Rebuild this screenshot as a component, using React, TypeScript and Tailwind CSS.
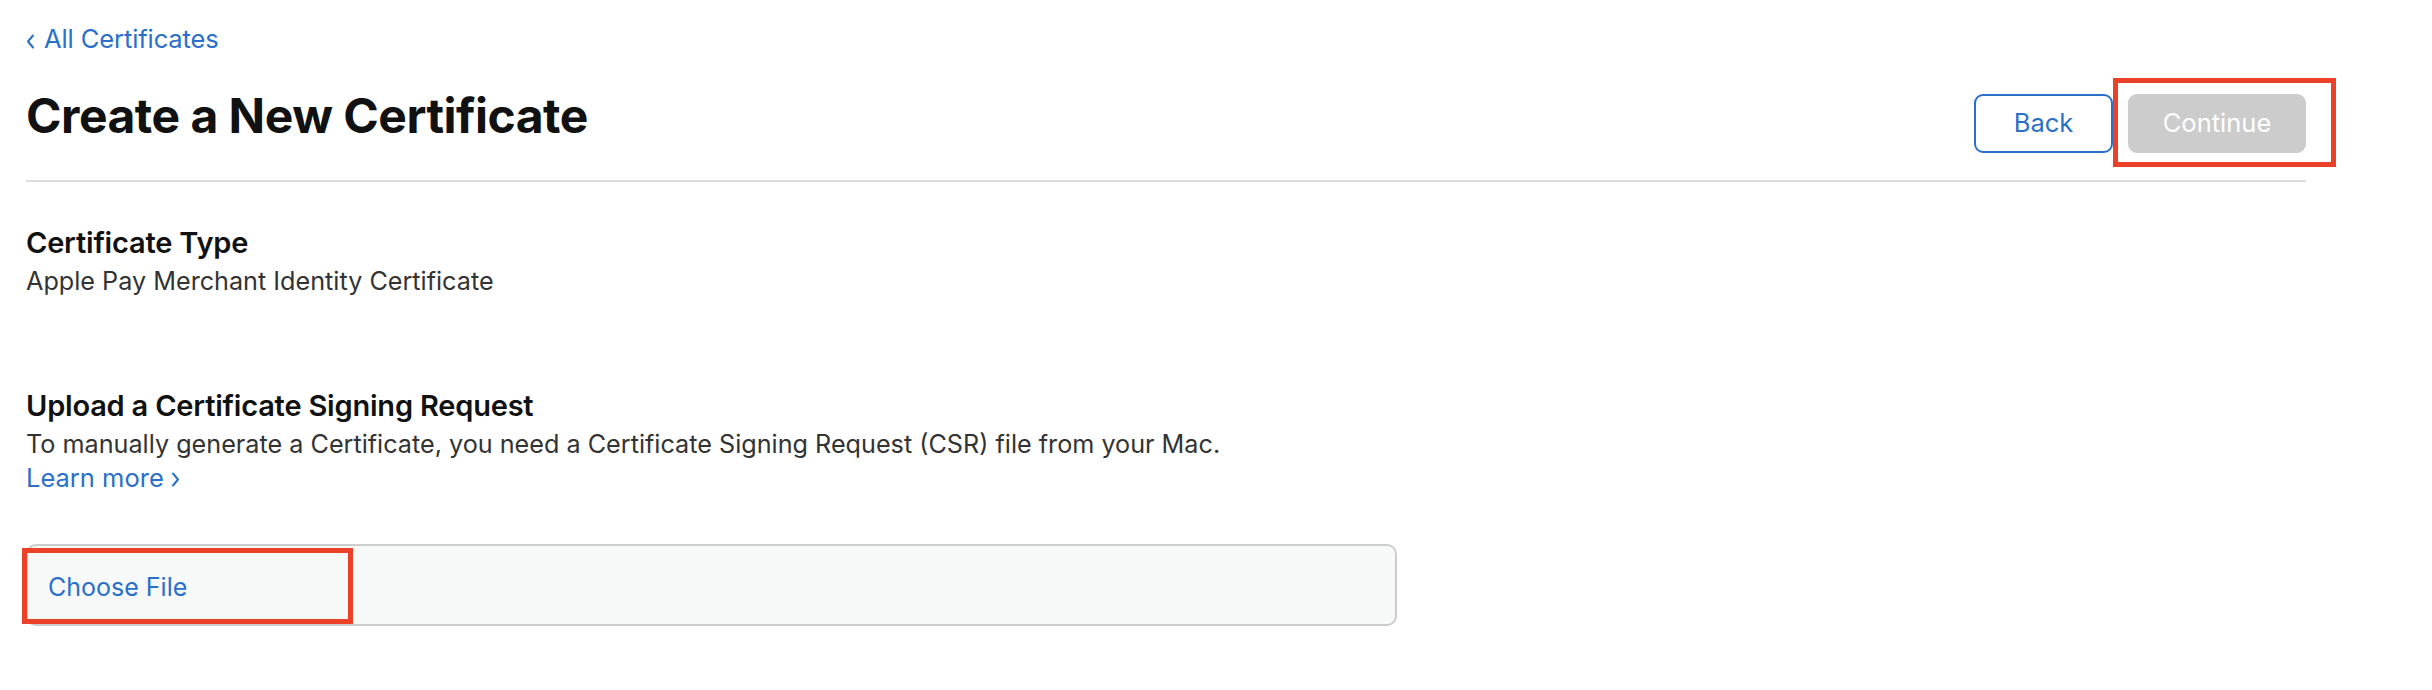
import React from "react";

const Chevron = ({ dir }: { dir: "left" | "right" }) => (
  <svg width="9" height="15" viewBox="0 0 9 15" className="shrink-0">
    {dir === "left" ? (
      <path d="M7 1.5 L2 7.5 L7 13.5" fill="none" stroke="#2a6fc9" strokeWidth="2" strokeLinecap="round" strokeLinejoin="round" />
    ) : (
      <path d="M2 1.5 L7 7.5 L2 13.5" fill="none" stroke="#2a6fc9" strokeWidth="2" strokeLinecap="round" strokeLinejoin="round" />
    )}
  </svg>
);

export default function App() {
  return (
    <div className="w-[2432px] h-[690px] bg-white font-['Inter',_'Liberation_Sans',_sans-serif] overflow-hidden">
      <div className="pl-[26px] w-[2306px]">
        {/* back link */}
        <div className="pt-[22px] h-[56px]">
          <a className="flex items-center h-[34px] text-[25.5px] leading-[34px] text-[#2a6fc9] tracking-[-0.1px]">
            <span className="mr-[9px] mt-[4px]"><Chevron dir="left" /></span>
            All Certificates
          </a>
        </div>

        {/* header row */}
        <div className="flex justify-between items-start h-[124px]">
          <h1 className="mt-[30px] text-[48px] leading-[60px] font-bold text-[#111111] tracking-[-0.5px]">
            Create a New Certificate
          </h1>
          <div className="mt-[38px] flex gap-[15px]">
            <button className="w-[139px] h-[59px] rounded-[9px] border-2 border-[#2a6fc9] text-[#2a6fc9] text-[25.5px] bg-white">
              Back
            </button>
            <div className="relative">
              <button className="w-[178px] h-[59px] rounded-[9px] bg-[#cccccc] text-white text-[25.5px]">
                Continue
              </button>
              <div className="absolute left-[-15px] right-[-30px] top-[-16px] bottom-[-14px] border-[5px] border-[#ea4128] pointer-events-none" />
            </div>
          </div>
        </div>

        <div className="h-[2px] bg-[#dcdcdc]" />

        {/* certificate type */}
        <div className="mt-[42px] text-[29px] leading-[38px] font-semibold text-[#111111] tracking-[-0.2px]">
          Certificate Type
        </div>
        <div className="text-[25.2px] leading-[38px] text-[#333333]">
          Apple Pay Merchant Identity Certificate
        </div>

        {/* upload */}
        <div className="mt-[87px] text-[29px] leading-[38px] font-semibold text-[#111111] tracking-[-0.2px]">
          Upload a Certificate Signing Request
        </div>
        <div className="mt-[2px] text-[25.2px] leading-[34px] text-[#333333]">
          To manually generate a Certificate, you need a Certificate Signing Request (CSR) file from your Mac.
        </div>
        <a className="flex items-center h-[34px] text-[25.5px] leading-[34px] text-[#2a6fc9]">
          Learn more
          <span className="ml-[7px] mt-[3px]"><Chevron dir="right" /></span>
        </a>

        {/* file input */}
        <div className="relative mt-[49px] w-[1371px] h-[82px] rounded-[10px] border-2 border-[#cccccc] bg-[#f7f9f9] flex items-center pl-[20px] pt-[5px]">
          <span className="text-[25px] text-[#2a6fc9]">Choose File</span>
          <div className="absolute left-[-6px] top-[2px] w-[331px] h-[76px] border-[5px] border-[#ea4128] pointer-events-none" />
        </div>
      </div>
    </div>
  );
}
